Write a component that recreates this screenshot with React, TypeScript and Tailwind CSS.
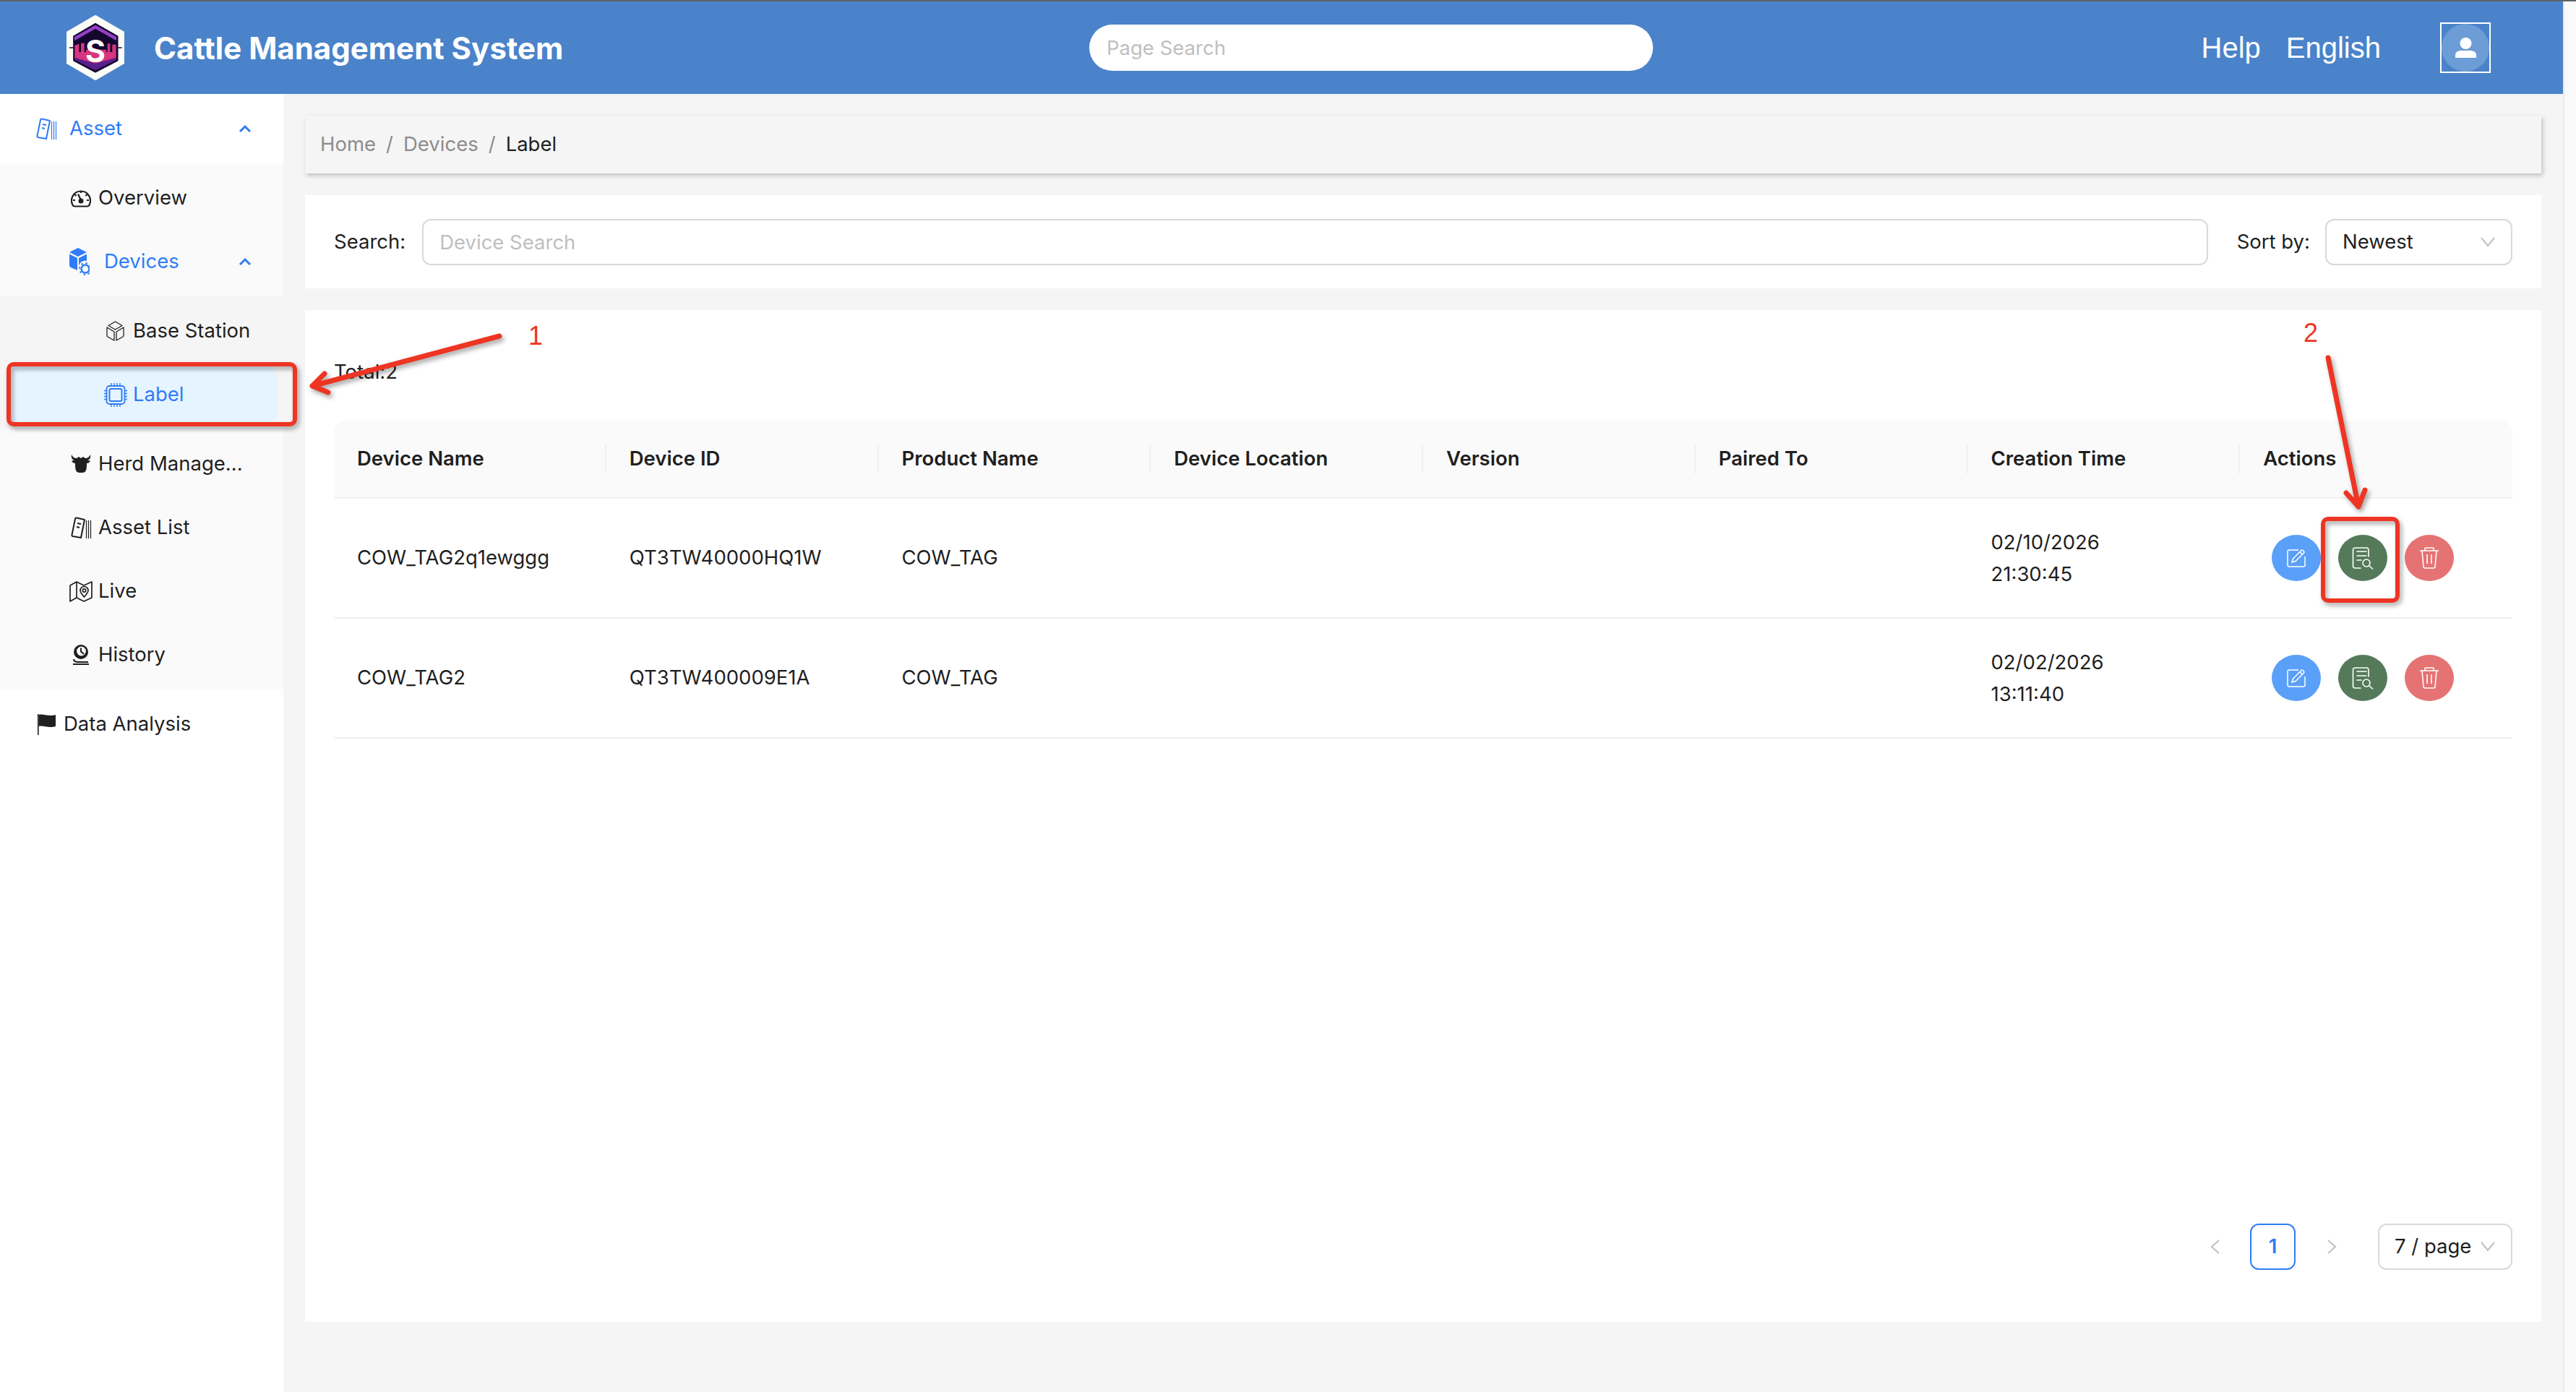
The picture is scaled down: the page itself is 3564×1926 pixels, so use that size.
import type { ReactNode } from "react";

const blue = "#2f7cf6";

const Chevron = ({ dir, color }: { dir: string; color: string }) => {
  if (dir === "up") {
    return (
      <svg width="18" height="12" viewBox="0 0 18 12" fill="none" stroke={color} strokeWidth="3">
        <path d="M2 10 L9 3 L16 10" />
      </svg>
    );
  }
  if (dir === "down") {
    return (
      <svg width="20" height="14" viewBox="0 0 20 14" fill="none" stroke={color} strokeWidth="2">
        <path d="M1 1 L10 12 L19 1" />
      </svg>
    );
  }
  return (
    <svg width="14" height="20" viewBox="0 0 14 20" fill="none" stroke={color} strokeWidth="2">
      <path d={dir === "left" ? "M12 1 L2 10 L12 19" : "M2 1 L12 10 L2 19"} />
    </svg>
  );
};

const Logo = () => (
  <svg width="80" height="90" viewBox="155 62 240 270">
    <polygon points="275,62 395,132 395,262 275,332 155,262 155,132" fill="#fdfdf8" stroke="#fdfdf8" strokeWidth="2" strokeLinejoin="round" />
    <polygon points="275,97 367,150 367,250 275,298 185,250 185,150" fill="#14062f" stroke="#14062f" strokeWidth="5" strokeLinejoin="round" />
    <polygon points="275,103 362,152 362,168 275,118 188,168 188,152" fill="#9440c6" />
    <polygon points="189,232 361,232 361,248 275,291 189,248" fill="#5b1f8c" />
    <path d="M189 186 H200 V182 H207 V230 H189Z M215 178 H229 V232 H215Z M236 205 H320 V232 H236Z M325 180 H336 V232 H325Z M345 184 H361 V232 H345Z M189 215 H361 V238 L275 262 L189 238Z" fill="#d8347f" />
    <path d="M167 197 H185 M367 197 H385" stroke="#14062f" strokeWidth="4" />
    <text x="275" y="256" textAnchor="middle" fontFamily="Inter, sans-serif" fontWeight="700" fontSize="128" fill="#fdfdf8">
      S
    </text>
  </svg>
);

const AssetIcon = ({ color }: { color: string }) => (
  <svg width="29" height="31" viewBox="0 0 29 31" fill="none" stroke={color} strokeWidth="2">
    <path d="M8 1.5 L19 4 L14 29 L2.5 27 a1.5 1.5 0 0 1-1-2 L6 3 a1.5 1.5 0 0 1 2-1.5Z" strokeLinejoin="round" />
    <path d="M9 9 L14 10 M8 14 L12 15" />
    <path d="M21.5 5 V30" strokeWidth="1.2" />
    <path d="M24.5 5 V30" strokeWidth="1.2" />
    <path d="M27.5 5 V30" strokeWidth="1.2" />
  </svg>
);

const OverviewIcon = () => (
  <svg width="28" height="26" viewBox="0 0 28 26" fill="none" stroke="#1f1f1f" strokeWidth="2.2">
    <path d="M5.5 24.5 H22.5 C24.5 24.5 25.5 23.5 26 21.5 A13 13 0 1 0 2 21.5 C2.5 23.5 3.5 24.5 5.5 24.5Z" />
    <path d="M14 16 L10 7.5 M14 3 V6 M5.5 8 L7.5 10 M22.5 8 L20.5 10 M3 16 H6 M25 16 H22" />
    <circle cx="14" cy="17" r="2.4" fill="#1f1f1f" />
  </svg>
);

const DevicesIcon = () => (
  <svg width="28" height="38" viewBox="0 0 28 38">
    <path d="M12 0 L24 6 L12 12 L0 6Z" fill={blue} />
    <path d="M0 8.5 L11 14 V31 L2 27 C.8 26.4 0 25.5 0 24Z" fill={blue} />
    <path d="M13 14 L24 8.5 V18 A9 9 0 0 0 13 28Z" fill={blue} />
    <circle cx="22" cy="29" r="5.5" fill="none" stroke={blue} strokeWidth="2.4" />
    <circle cx="22" cy="29" r="8" fill="none" stroke={blue} strokeWidth="2" strokeDasharray="2.5 3.8" />
  </svg>
);

const BaseIcon = () => (
  <svg width="25" height="28" viewBox="0 0 25 28" fill="none" stroke="#1f1f1f" strokeWidth="1.3" strokeLinejoin="round">
    <path d="M12.5 1 L22 6.5 L12.5 12 L3 6.5Z" />
    <path d="M1 9 L11 15 V27 L2 22 C1.4 21.6 1 21 1 20Z" />
    <path d="M24 9 L14 15 V27 L23 22 C23.6 21.6 24 21 24 20Z" />
  </svg>
);

const ChipIcon = () => (
  <svg width="32" height="33" viewBox="0 0 32 33" fill="none" stroke={blue}>
    <rect x="3.5" y="4" width="25" height="25" rx="4" strokeWidth="1.8" />
    <rect x="7.5" y="8" width="17" height="17" rx="2" strokeWidth="2" />
    <path d="M10 0 V4 M14 0 V4 M18 0 V4 M22 0 V4 M10 29 V33 M14 29 V33 M18 29 V33 M22 29 V33 M0 10.5 H3.5 M0 14.5 H3.5 M0 18.5 H3.5 M0 22.5 H3.5 M28.5 10.5 H32 M28.5 14.5 H32 M28.5 18.5 H32 M28.5 22.5 H32" strokeWidth="1.4" />
  </svg>
);

const HerdIcon = () => (
  <svg width="28" height="26" viewBox="0 0 28 26" fill="#1f1f1f">
    <path d="M1 0 C0 4 2 7 5 8 L1 8.5 C2 11 4 12 6 12 C6 17 6 21 8 23.5 C10 25.5 18 25.5 20 23.5 C22 21 22 17 22 12 C24 12 26 11 27 8.5 L23 8 C26 7 28 4 27 0 C26 3 23 5 20 5 L17 3 L14 5 L11 3 L8 5 C5 5 2 3 1 0Z" />
  </svg>
);

const MapIcon = () => (
  <svg width="32" height="29" viewBox="0 0 32 29" fill="none" stroke="#1f1f1f" strokeWidth="1.7" strokeLinejoin="round">
    <path d="M1 6 L10 1 L20 6 L31 1 V23 L20 28 L10 23 L1 28Z" />
    <path d="M10 1 V23" />
    <path d="M20.5 22 C17 18 15 15.5 15 13 A5.5 5.5 0 0 1 26 13 C26 15.5 24 18 20.5 22Z" fill="#fafafa" />
    <circle cx="20.5" cy="13" r="2.2" />
  </svg>
);

const HistoryIcon = () => (
  <svg width="24" height="28" viewBox="0 0 24 28" fill="none" stroke="#1f1f1f" strokeWidth="2">
    <circle cx="12" cy="10" r="9" fill="#1f1f1f" />
    <circle cx="12.5" cy="9" r="6.4" fill="#fafafa" stroke="none" />
    <path d="M12 4.5 V9.5 L16 13" />
    <path d="M2 20 C2 24 6 24 12 24 H22 M1 27 H23" />
  </svg>
);

const FlagIcon = () => (
  <svg width="25" height="29" viewBox="0 0 25 29" fill="#1f1f1f">
    <rect x="0" y="0" width="1.6" height="29" />
    <path d="M1.6 1 C8 -1 14 4 25 1 V17 C14 20 8 15 1.6 17Z" />
  </svg>
);

const EditIcon = () => (
  <svg width="26" height="26" viewBox="0 0 26 26" fill="none" stroke="#fff" strokeWidth="1.5" strokeLinejoin="round">
    <path d="M16 2 H3 a2 2 0 0 0-2 2 V23 a2 2 0 0 0 2 2 H23 a2 2 0 0 0 2-2 V11" />
    <path d="M7 19 L8.5 14 L20 2.5 a1.5 1.5 0 0 1 2 0 L23.5 4 a1.5 1.5 0 0 1 0 2 L12 17.5Z" />
    <path d="M18 4.5 L21.5 8" />
  </svg>
);

const ViewIcon = () => (
  <svg width="30" height="32" viewBox="0 0 30 32" fill="none" stroke="#fff" strokeWidth="1.6" strokeLinecap="round">
    <path d="M12 30 H4.5 a3 3 0 0 1-3-3 V5 a3 3 0 0 1 3-3 H20 a3 3 0 0 1 3 3 V14" />
    <path d="M7 7 H20 M7 13 H20 M7 19 H13" />
    <circle cx="20" cy="23" r="5" />
    <path d="M24 27 L28.5 31" />
  </svg>
);

const TrashIcon = () => (
  <svg width="28" height="30" viewBox="0 0 28 30" fill="none" stroke="#fff" strokeWidth="1.6" strokeLinejoin="round">
    <path d="M1 5 H27 M8 5 V2 a1 1 0 0 1 1-1 H19 a1 1 0 0 1 1 1 V5" />
    <path d="M4 5 L6 27 a2 2 0 0 0 2 2 H20 a2 2 0 0 0 2-2 L24 5" />
    <path d="M11 10 V23 M17 10 V23" />
  </svg>
);

const UserIcon = () => (
  <svg width="29" height="28" viewBox="0 0 29 28" fill="#fff">
    <ellipse cx="14.5" cy="8" rx="8" ry="8" />
    <path d="M0 28 V24 C0 20 4 18 9 18 H20 C25 18 29 20 29 24 V28Z" />
  </svg>
);

const MenuRow = ({
  icon,
  text,
  iconLeft,
  textLeft,
  active,
  selected,
  open,
}: {
  icon: ReactNode;
  text: string;
  iconLeft: string;
  textLeft: string;
  active?: boolean;
  selected?: boolean;
  open?: boolean;
}) => (
  <div
    className={`mx-2 flex h-[80px] items-center rounded-2xl ${iconLeft} ${selected ? "bg-[#e6f4ff]" : ""} ${
      active || selected ? "text-[#2f7cf6]" : "text-[#1f1f1f]"
    }`}
  >
    <span className="flex-none">{icon}</span>
    <span className={`flex-1 ${textLeft}`}>{text}</span>
    {open && (
      <span className="mr-[36px] flex">
        <Chevron dir="up" color={blue} />
      </span>
    )}
  </div>
);

const Sidebar = () => (
  <aside className="w-[392px] flex-none bg-white">
    <div className="py-2">
      <MenuRow icon={<AssetIcon color={blue} />} text="Asset" iconLeft="pl-[42px]" textLeft="ml-[17px]" active open />
    </div>
    <div className="flex flex-col gap-2 bg-[#fafafa] py-2">
      <MenuRow icon={<OverviewIcon />} text="Overview" iconLeft="pl-[90px]" textLeft="ml-[10px]" />
      <MenuRow icon={<DevicesIcon />} text="Devices" iconLeft="pl-[88px]" textLeft="ml-[20px]" active open />
      <div className="flex flex-col gap-2 bg-[#f5f5f5] py-2">
        <MenuRow icon={<BaseIcon />} text="Base Station" iconLeft="pl-[139px]" textLeft="ml-[12px]" />
        <MenuRow icon={<ChipIcon />} text="Label" iconLeft="pl-[136px]" textLeft="ml-[8px]" selected />
      </div>
      <MenuRow icon={<HerdIcon />} text="Herd Manage..." iconLeft="pl-[90px]" textLeft="ml-[10px]" />
      <MenuRow icon={<AssetIcon color="#1f1f1f" />} text="Asset List" iconLeft="pl-[90px]" textLeft="ml-[9px]" />
      <MenuRow icon={<MapIcon />} text="Live" iconLeft="pl-[88px]" textLeft="ml-[8px]" />
      <MenuRow icon={<HistoryIcon />} text="History" iconLeft="pl-[92px]" textLeft="ml-[12px]" />
    </div>
    <div className="py-2">
      <MenuRow icon={<FlagIcon />} text="Data Analysis" iconLeft="pl-[44px]" textLeft="ml-[11px]" />
    </div>
  </aside>
);

const columns = ["Device Name", "Device ID", "Product Name", "Device Location", "Version", "Paired To", "Creation Time", "Actions"];

const rows = [
  { name: "COW_TAG2q1ewggg", id: "QT3TW40000HQ1W", product: "COW_TAG", date: "02/10/2026", time: "21:30:45" },
  { name: "COW_TAG2", id: "QT3TW400009E1A", product: "COW_TAG", date: "02/02/2026", time: "13:11:40" },
];

const ActionButton = ({ bg, children }: { bg: string; children: ReactNode }) => (
  <button className={`flex h-[64px] w-[68px] items-center justify-center rounded-[50%] ${bg}`}>{children}</button>
);

const DeviceTable = () => (
  <div className="mt-[50px]">
    <div className="grid h-[108px] grid-cols-8 items-center rounded-t-2xl border-b-2 border-[#f0f0f0] bg-[#fafafa] font-semibold">
      {columns.map((col, key) => (
        <div key={key} className={`flex h-[40px] items-center px-8 ${key < 7 ? "border-r-2 border-[#f0f0f0]" : ""}`}>
          {col}
        </div>
      ))}
    </div>
    {rows.map((row, key) => (
      <div key={key} className="grid h-[166px] grid-cols-8 items-center border-b-2 border-[#f0f0f0]">
        <div className="px-8">{row.name}</div>
        <div className="px-8">{row.id}</div>
        <div className="px-8">{row.product}</div>
        <div />
        <div />
        <div />
        <div className="px-8 leading-[44px]">
          {row.date}
          <br />
          {row.time}
        </div>
        <div className="flex gap-6 pl-[44px]">
          <ActionButton bg="bg-[#5aa0f8]">
            <EditIcon />
          </ActionButton>
          <ActionButton bg="bg-[#557a5a]">
            <ViewIcon />
          </ActionButton>
          <ActionButton bg="bg-[#e57373]">
            <TrashIcon />
          </ActionButton>
        </div>
      </div>
    ))}
  </div>
);

const Annotations = () => (
  <>
    <svg
      className="pointer-events-none absolute top-0 left-0 drop-shadow-[3px_4px_3px_rgba(0,0,0,0.35)]"
      width="3564"
      height="1926"
      fill="none"
      stroke="#ee3524"
      strokeWidth="6"
      strokeLinecap="round"
      strokeLinejoin="round"
    >
      <rect x="12" y="504" width="396" height="83" rx="7" />
      <path d="M691 465 L432 534 M449 517 L432 534 L454 543" strokeWidth="7" />
      <rect x="3214" y="718" width="103" height="113" rx="7" />
      <path d="M3221 495 L3263 701 M3246 682 L3263 701 L3272 678" strokeWidth="7" />
    </svg>
    <span className="absolute top-[438px] left-[731px] font-['Liberation_Sans',sans-serif] text-[36px] text-[#ee3524]">1</span>
    <span className="absolute top-[434px] left-[3187px] font-['Liberation_Sans',sans-serif] text-[36px] text-[#ee3524]">2</span>
  </>
);

const App = () => {
  return (
    <div className="relative h-[1926px] w-[3564px] overflow-hidden bg-[#f5f5f5] font-[Inter,sans-serif] text-[27.5px] text-[#1f1f1f]">
      <div className="h-[2px] bg-[#5f6368]" />
      <div className="flex h-[1924px]">
        <div className="flex w-[3546px] flex-none flex-col">
          <header className="grid h-[128px] flex-none grid-cols-[1507px_780px_1fr] items-center bg-[#4a83ca] text-white">
            <div className="flex items-center pl-[92px]">
              <Logo />
              <span className="ml-[41px] text-[42px] font-bold">Cattle Management System</span>
            </div>
            <input
              className="h-[64px] w-full rounded-full bg-white px-6 text-[27.5px] outline-none placeholder:text-[#bfbfbf]"
              placeholder="Page Search"
            />
            <div className="flex items-center justify-end pr-[100px] font-['Liberation_Sans',sans-serif] text-[40px]">
              <span>Help</span>
              <span className="ml-[35px]">English</span>
              <span className="ml-[82px] flex h-[70px] w-[70px] items-center justify-center border-2 border-white">
                <span className="flex h-[66px] w-[66px] items-center justify-center rounded-[50%] bg-[#6d9dd6]">
                  <UserIcon />
                </span>
              </span>
            </div>
          </header>
          <div className="flex min-h-0 flex-1">
            <Sidebar />
            <main className="flex min-w-0 flex-1 flex-col gap-[30px] p-[30px] pb-[97px]">
              <div className="flex h-[80px] flex-none items-center gap-[14px] bg-[#f5f5f5] pl-[21px] text-[#8c8c8c] shadow-[2px_3px_6px_rgba(0,0,0,0.22)]">
                <span>Home</span>
                <span>/</span>
                <span>Devices</span>
                <span>/</span>
                <span className="text-[#1f1f1f]">Label</span>
              </div>
              <div className="flex h-[129px] flex-none items-center bg-white px-10">
                <span>Search:</span>
                <input
                  className="ml-[23px] h-[64px] flex-1 rounded-xl border-2 border-[#d9d9d9] px-[22px] outline-none placeholder:text-[#bfbfbf]"
                  placeholder="Device Search"
                />
                <span className="ml-10">Sort by:</span>
                <div className="ml-[21px] flex h-[64px] w-[259px] items-center justify-between rounded-xl border-2 border-[#d9d9d9] pr-[22px] pl-[22px]">
                  <span>Newest</span>
                  <Chevron dir="down" color="#bfbfbf" />
                </div>
              </div>
              <div className="flex min-h-0 flex-1 flex-col bg-white px-10 pt-[67px]">
                <div className="leading-[36px]">Total:2</div>
                <DeviceTable />
                <div className="mt-auto mb-[72px] flex items-center justify-end">
                  <Chevron dir="left" color="#bfbfbf" />
                  <span className="ml-[41px] flex h-[64px] w-[63px] items-center justify-center rounded-xl border-2 border-[#2f7cf6] font-semibold text-[#2f7cf6]">
                    1
                  </span>
                  <span className="ml-[43px] flex">
                    <Chevron dir="right" color="#bfbfbf" />
                  </span>
                  <div className="ml-[57px] flex h-[64px] w-[186px] items-center justify-between rounded-xl border-2 border-[#d9d9d9] pr-[22px] pl-[21px]">
                    <span>7 / page</span>
                    <Chevron dir="down" color="#bfbfbf" />
                  </div>
                </div>
              </div>
            </main>
          </div>
        </div>
        <div className="flex-1 border-l-2 border-[#e8e8e8] bg-[#f9f9f9]" />
      </div>
      <Annotations />
    </div>
  );
};

export default App;
